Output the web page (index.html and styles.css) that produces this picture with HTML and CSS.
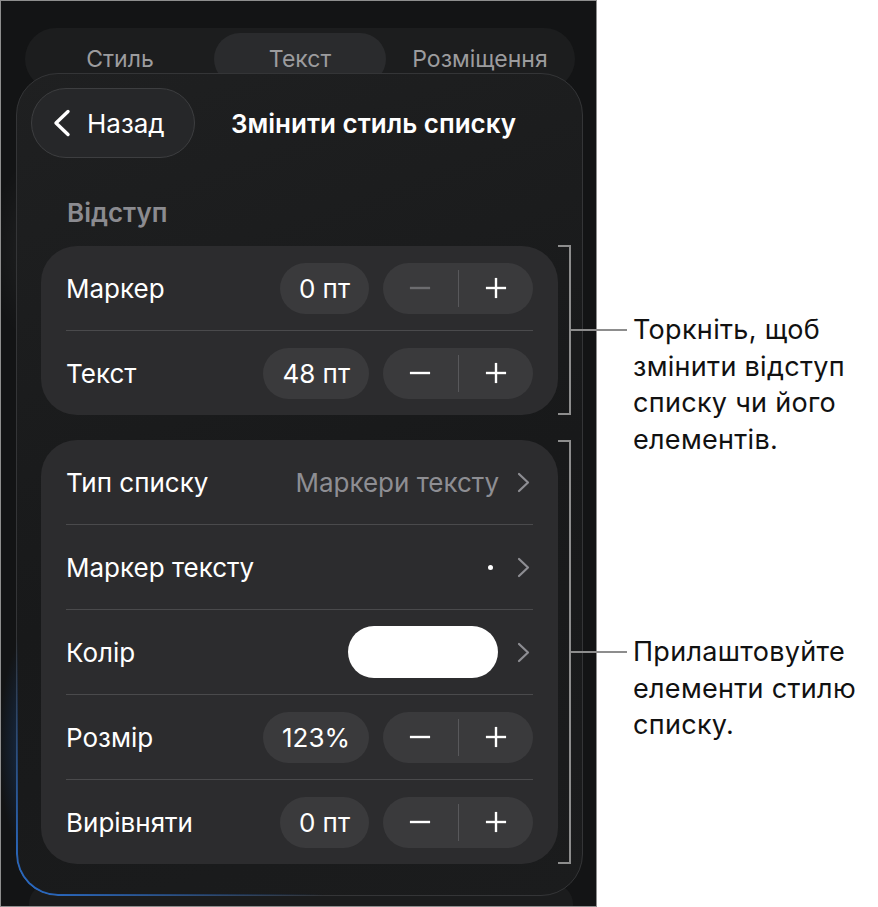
FILE: index.html
```html
<!DOCTYPE html>
<html lang="uk">
<head>
    <meta charset="UTF-8">
    <meta name="viewport" content="width=device-width, initial-scale=1.0">
    <title>Змінити стиль списку</title>
    <link rel="stylesheet" href="styles.css">
</head>
<body>
    <div class="figure">
        <div class="screen">
            <nav class="tabs">
                <span class="tab">Стиль</span>
                <span class="tab active">Текст</span>
                <span class="tab">Розміщення</span>
            </nav>

            <section class="sheet">
                <header class="sheet-head">
                    <button class="back" type="button">
                        <svg width="18" height="28" viewBox="0 0 18 28"><polyline points="15,2.5 3,14 15,25.5" /></svg>
                        Назад
                    </button>
                    <h2 class="sheet-title">Змінити стиль списку</h2>
                </header>

                <h3 class="section-label">Відступ</h3>
                <div class="group">
                    <div class="row">
                        <span class="label">Маркер</span>
                        <span class="value">0 пт</span>
                        <div class="stepper">
                            <button type="button" disabled><svg class="minus" viewBox="0 0 24 24"><line x1="1" y1="12" x2="23" y2="12" /></svg></button>
                            <span class="sep"></span>
                            <button type="button"><svg viewBox="0 0 24 24"><line x1="1" y1="12" x2="23" y2="12" /><line x1="12" y1="1" x2="12" y2="23" /></svg></button>
                        </div>
                    </div>
                    <div class="row">
                        <span class="label">Текст</span>
                        <span class="value">48 пт</span>
                        <div class="stepper">
                            <button type="button"><svg class="minus" viewBox="0 0 24 24"><line x1="1" y1="12" x2="23" y2="12" /></svg></button>
                            <span class="sep"></span>
                            <button type="button"><svg viewBox="0 0 24 24"><line x1="1" y1="12" x2="23" y2="12" /><line x1="12" y1="1" x2="12" y2="23" /></svg></button>
                        </div>
                    </div>
                </div>

                <div class="group">
                    <div class="row">
                        <span class="label">Тип списку</span>
                        <span class="detail">Маркери тексту</span>
                        <svg class="chevron" viewBox="0 0 14 21"><polyline points="2,2 11,10.5 2,19" /></svg>
                    </div>
                    <div class="row">
                        <span class="label">Маркер тексту</span>
                        <span class="bullet"></span>
                        <svg class="chevron" viewBox="0 0 14 21"><polyline points="2,2 11,10.5 2,19" /></svg>
                    </div>
                    <div class="row">
                        <span class="label">Колір</span>
                        <span class="swatch"></span>
                        <svg class="chevron" viewBox="0 0 14 21"><polyline points="2,2 11,10.5 2,19" /></svg>
                    </div>
                    <div class="row">
                        <span class="label">Розмір</span>
                        <span class="value">123%</span>
                        <div class="stepper">
                            <button type="button"><svg class="minus" viewBox="0 0 24 24"><line x1="1" y1="12" x2="23" y2="12" /></svg></button>
                            <span class="sep"></span>
                            <button type="button"><svg viewBox="0 0 24 24"><line x1="1" y1="12" x2="23" y2="12" /><line x1="12" y1="1" x2="12" y2="23" /></svg></button>
                        </div>
                    </div>
                    <div class="row">
                        <span class="label">Вирівняти</span>
                        <span class="value">0 пт</span>
                        <div class="stepper">
                            <button type="button"><svg class="minus" viewBox="0 0 24 24"><line x1="1" y1="12" x2="23" y2="12" /></svg></button>
                            <span class="sep"></span>
                            <button type="button"><svg viewBox="0 0 24 24"><line x1="1" y1="12" x2="23" y2="12" /><line x1="12" y1="1" x2="12" y2="23" /></svg></button>
                        </div>
                    </div>
                </div>
            </section>

            <div class="dock"></div>
        </div>

        <!-- callouts -->
        <div class="callout callout-indent">
            <span class="bracket"></span>
            <span class="leader"></span>
            <p>Торкніть, щоб<br>змінити відступ<br>списку чи його<br>елементів.</p>
        </div>
        <div class="callout callout-style">
            <span class="bracket"></span>
            <span class="leader"></span>
            <p>Прилаштовуйте<br>елементи стилю<br>списку.</p>
        </div>
    </div>
</body>
</html>
```

FILE: styles.css
```css
* {
    box-sizing: border-box;
}
body {
    margin: 0;
    background: #fff;
    font-family: Inter, "Noto Sans", sans-serif;
}
.figure {
    position: relative;
    width: 878px;
    height: 907px;
    display: flex;
}

/* phone screen */
.screen {
    width: 597px;
    height: 907px;
    border: 1px solid #8e8e8e;
    background:
        radial-gradient(ellipse 30px 110px at 28px 745px, rgba(28, 88, 170, 0.4), transparent),
        radial-gradient(ellipse 40px 90px at 30px 250px, rgba(255, 255, 255, 0.05), transparent),
        #131415;
    overflow: hidden;
    display: flex;
    flex-direction: column;
}

.tabs {
    margin: 27px 21px 0 24px;
    height: 62px;
    padding: 5px;
    border-radius: 31px;
    background: #1c1d1e;
    display: grid;
    grid-template-columns: repeat(3, 1fr);
}
.tab {
    height: 52px;
    line-height: 52px;
    text-align: center;
    font-size: 23px;
    color: #9c9c9e;
}
.tab.active {
    margin: 0 4px;
    border-radius: 26px;
    background: #2a2b2d;
}

/* sheet */
.sheet {
    position: relative;
    z-index: 1;
    margin: -17px 0 0 15px;
    width: 567px;
    height: 823px;
    flex-shrink: 0;
    border: 1px solid #343537;
    border-radius: 42px;
    background: linear-gradient(160deg, #1f2021 0%, #18191a 55%, #1b1c1d 100%);
}
.sheet::after {
    content: "";
    position: absolute;
    inset: -1px;
    border-radius: inherit;
    padding: 2px;
    background: linear-gradient(40deg, #2a6fcf 0%, rgba(42, 111, 207, 0.45) 11%, transparent 20%);
    -webkit-mask: linear-gradient(#000 0 0) content-box, linear-gradient(#000 0 0);
    -webkit-mask-composite: xor;
    mask-composite: exclude;
    pointer-events: none;
}

.sheet-head {
    display: flex;
    align-items: center;
    padding: 14px 0 0 14px;
}
.back {
    width: 164px;
    height: 70px;
    border-radius: 35px;
    border: 1px solid #3d3e40;
    background: #262729;
    color: #fff;
    font-family: inherit;
    font-size: 26px;
    display: flex;
    align-items: center;
    gap: 16px;
    padding: 0 0 0 21px;
}
.back svg {
    fill: none;
    stroke: #fff;
    stroke-width: 3.4;
    stroke-linecap: round;
    stroke-linejoin: round;
}
.sheet-title {
    margin: 0 0 0 36px;
    font-size: 26px;
    font-weight: 600;
    color: #fff;
}

.section-label {
    margin: 42px 0 20px 50px;
    font-size: 26px;
    line-height: 26px;
    font-weight: 600;
    color: #8b8b90;
}

.group {
    margin: 0 24px;
    padding: 0 25px;
    border-radius: 36px;
    background: #2c2c2e;
}
.group + .group {
    margin-top: 25px;
}
.row {
    height: 85px;
    display: flex;
    align-items: center;
    border-bottom: 1px solid #4a4a4c;
}
.row:last-child {
    height: 84px;
    border-bottom: none;
}
.label {
    flex: 1;
    font-size: 26px;
    color: #fff;
}

.value {
    height: 51px;
    line-height: 51px;
    padding: 0 19px;
    margin-right: 14px;
    border-radius: 26px;
    background: #3a3a3c;
    font-size: 26px;
    color: #fff;
}
.stepper {
    width: 150px;
    height: 51px;
    border-radius: 26px;
    background: #3a3a3c;
    display: flex;
    align-items: center;
}
.stepper button {
    flex: 1;
    height: 100%;
    border: none;
    background: none;
    padding: 0;
    display: flex;
    align-items: center;
    justify-content: center;
}
.stepper svg {
    width: 22px;
    height: 22px;
    stroke: #fff;
    stroke-width: 2.6;
}
.stepper button:disabled svg {
    stroke: #6c6c6f;
}
.sep {
    width: 1px;
    height: 37px;
    background: #58585b;
}

.detail {
    margin-right: 18px;
    font-size: 26px;
    color: #8e8e93;
}
.bullet {
    width: 5px;
    height: 5px;
    margin-right: 24px;
    border-radius: 50%;
    background: #fff;
}
.swatch {
    width: 150px;
    height: 52px;
    margin-right: 19px;
    border-radius: 26px;
    background: #fff;
}
.chevron {
    width: 14px;
    height: 21px;
    margin-right: 2px;
    fill: none;
    stroke: #8e8e93;
    stroke-width: 2.2;
    stroke-linecap: round;
    stroke-linejoin: round;
}

.dock {
    margin: -12px 0 0 28px;
    width: 544px;
    height: 40px;
    flex-shrink: 0;
    border-radius: 20px;
    background: #1b1c1d;
}

/* callouts beside the screen */
.callout {
    position: absolute;
    z-index: 2;
    left: 558px;
    width: 300px;
}
.callout-indent {
    top: 245px;
    height: 170px;
}
.callout-style {
    top: 440px;
    height: 424px;
}
.bracket {
    display: block;
    width: 13px;
    height: 100%;
    border: 2px solid #8d8d8d;
    border-left: none;
}
.leader {
    position: absolute;
    left: 13px;
    top: 50%;
    width: 56px;
    height: 2px;
    margin-top: -1px;
    background: #8d8d8d;
}
.callout p {
    position: absolute;
    left: 75px;
    top: 50%;
    margin: -18px 0 0;
    font-size: 27px;
    line-height: 36.7px;
    letter-spacing: 0.3px;
    color: #111;
    white-space: nowrap;
}
```
